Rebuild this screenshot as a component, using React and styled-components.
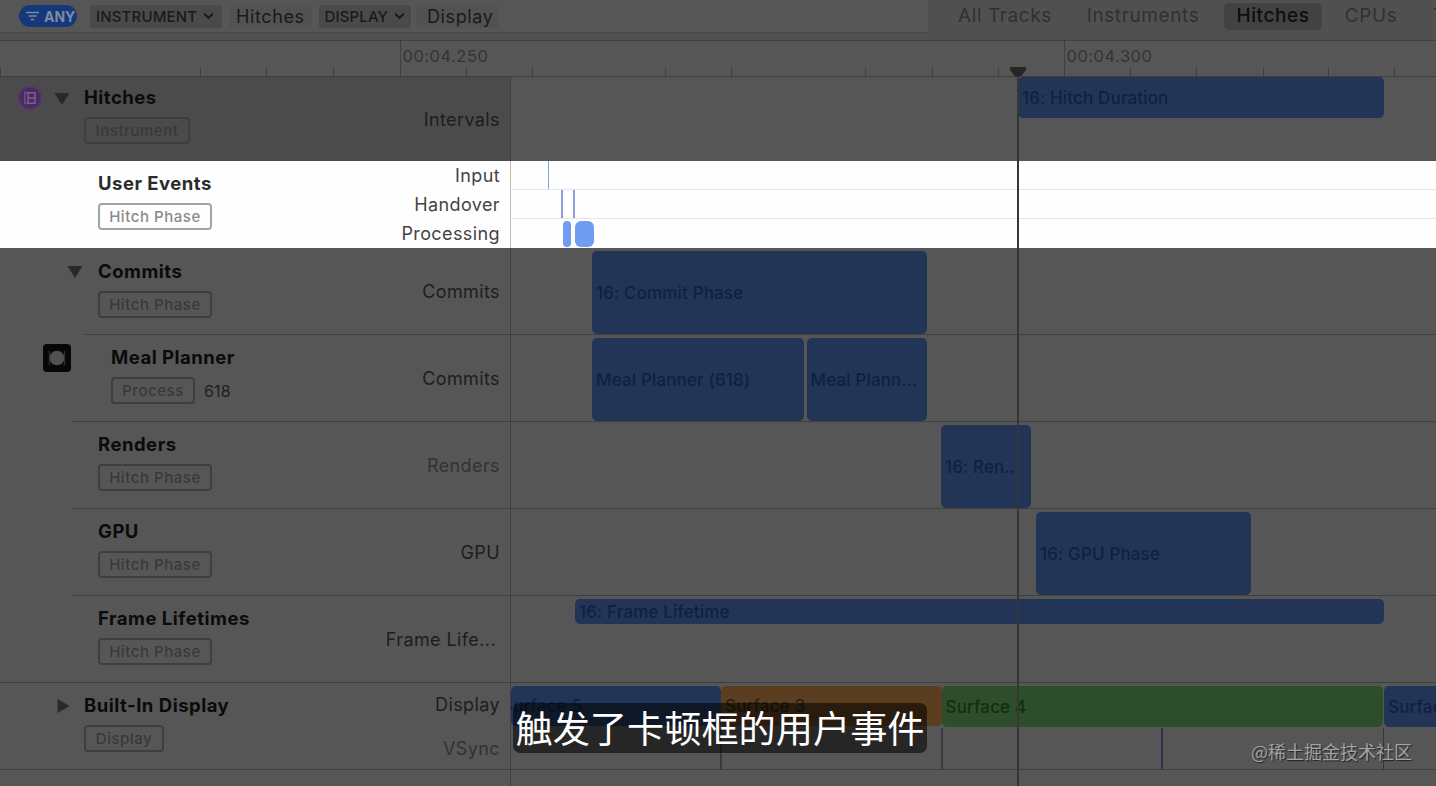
import React from "react";
import styled, { createGlobalStyle } from "styled-components";

const ink = {
  base: "#565656",
  bar: "#505050",
  selected: "#4b4b4b",
  line: "#3f3f3f",
  text: "#1e1e1e",
  blue: "#223556",
  orange: "#5b3e20",
  green: "#2d4d2b",
};

const GlobalStyle = createGlobalStyle`
  * { box-sizing: border-box; }
  body {
    margin: 0;
    background: ${ink.base};
    font-family: Inter, "Liberation Sans", "Noto Sans CJK SC", sans-serif;
    overflow: hidden;
  }
`;

const Window = styled.div`
  position: relative;
  width: 1436px;
  height: 786px;
  overflow: hidden;
  background: ${ink.base};
  color: ${ink.text};
  white-space: nowrap;
`;

const Toolbar = styled.header`
  display: flex;
  height: 41px;
  background: ${ink.bar};
  border-bottom: 1px solid ${ink.line};
`;

const FilterField = styled.div`
  display: flex;
  flex: none;
  align-items: center;
  width: 928px;
  height: 33px;
  padding-left: 19px;
  background: ${ink.base};
  border-bottom: 1px solid #4a4a4a;
`;

const AnyPill = styled.div`
  display: flex;
  align-items: center;
  gap: 5px;
  width: 58px;
  height: 22px;
  padding-left: 7px;
  border-radius: 11px;
  background: #15387b;
  color: #7e8aa3;
  font-size: 14px;
  font-weight: 700;
  letter-spacing: 0;
`;

const Token = styled.div`
  display: flex;
  align-items: center;
  gap: 6px;
  height: 23px;
  width: ${(p) => p.$width}px;
  margin-left: ${(p) => p.$gap}px;
  padding-left: ${(p) => p.$inset}px;
  border-radius: 3px;
  background: ${(p) => (p.$value ? "#525252" : "#4a4a4a")};
  color: #191919;
  font-size: ${(p) => (p.$value ? 18 : 15)}px;
  font-weight: ${(p) => (p.$value ? 400 : 500)};
  letter-spacing: ${(p) => (p.$value ? 0.6 : 0.15)}px;
`;

const Tabs = styled.nav`
  display: flex;
  flex: none;
  align-items: center;
  height: 32px;
  padding-left: 20px;
`;

const Tab = styled.div`
  width: ${(p) => p.$width}px;
  height: 27px;
  margin-right: ${(p) => p.$gap}px;
  border-radius: 5px;
  background: ${(p) => (p.$active ? "#424242" : "transparent")};
  color: ${(p) => (p.$active ? "#0e0e0e" : "#313131")};
  font-size: 19px;
  font-weight: ${(p) => (p.$active ? 500 : 400)};
  letter-spacing: 0.6px;
  line-height: 26px;
  text-align: center;
`;

const Ruler = styled.div`
  display: flex;
  align-items: flex-end;
  height: 36px;
  border-bottom: 1px solid ${ink.line};
`;

const Tick = styled.div`
  width: ${(p) => p.$span}px;
  height: ${(p) => (p.$major ? 35 : 8)}px;
  flex: none;
  padding: 4px 0 0 2px;
  border-left: 1px solid ${(p) => (p.$blank ? "transparent" : ink.line)};
  color: #333;
  font-size: 16.5px;
  line-height: 22px;
  letter-spacing: 0.5px;
`;

const Row = styled.section`
  display: flex;
  height: ${(p) => p.$height || 87}px;
  background: ${(p) => (p.$lit ? "#fefefe" : ink.base)};
  color: ${(p) => (p.$lit ? "#2b2b2b" : "#0b0b0b")};
  --label: ${(p) => (p.$lit ? "#444" : "#1d1d1d")};
  --tag: ${(p) => (p.$lit ? "#8a8a8a" : "#393939")};
  --edge: ${(p) => (p.$lit ? "#a4a4a4" : "#3e3e3e")};
  --rule: ${(p) => (p.$lit ? "#bdbdbd" : ink.line)};
`;

const Header = styled.div`
  display: flex;
  width: 511px;
  flex: none;
  border-right: 1px solid var(--rule);
  background: ${(p) => (p.$selected ? ink.selected : "transparent")};
`;

const Gutter = styled.div`
  display: flex;
  align-items: flex-start;
  justify-content: flex-end;
  width: ${(p) => p.$width}px;
  padding-right: ${(p) => p.$end}px;
  padding-top: ${(p) => p.$top}px;
  gap: 12px;
  flex: none;
  border-bottom: ${(p) => (p.$lined ? `1px solid ${ink.line}` : "0")};
`;

const Body = styled.div`
  display: flex;
  flex: 1;
  justify-content: space-between;
  padding-left: ${(p) => p.$inset}px;
  padding-right: 10px;
  border-bottom: ${(p) => (p.$lined ? `1px solid ${ink.line}` : "0")};
`;

const Info = styled.div`
  padding-top: ${(p) => p.$top}px;
`;

const Name = styled.div`
  height: 22px;
  font-size: 18.5px;
  font-weight: 700;
  line-height: 21px;
  letter-spacing: 0.5px;
`;

const TagLine = styled.div`
  display: flex;
  align-items: center;
  gap: 9px;
  margin-top: 8px;
  color: ${ink.text};
  font-size: 16px;
  letter-spacing: 0.2px;
`;

const Tag = styled.span`
  width: ${(p) => p.$width}px;
  height: 27px;
  border: 2px solid var(--edge);
  border-radius: 4px;
  color: var(--tag);
  font-size: 15px;
  font-weight: 500;
  letter-spacing: 0.55px;
  line-height: 23px;
  text-align: center;
`;

const Labels = styled.div`
  display: flex;
  flex-direction: column;
  justify-content: center;
  text-align: right;
  color: var(--label);
  font-size: 18px;
  letter-spacing: 0.4px;
`;

const Label = styled.div`
  height: ${(p) => p.$height || 29}px;
  line-height: ${(p) => p.$height || 29}px;
  color: ${(p) => (p.$muted ? "#323232" : "inherit")};
  padding-right: ${(p) => p.$end || 0}px;
  padding-bottom: ${(p) => p.$lift || 0}px;
`;

const Track = styled.div`
  display: flex;
  flex: 1;
  flex-direction: column;
  min-width: 0;
  overflow: hidden;
  border-bottom: ${(p) => (p.$lined ? `1px solid ${ink.line}` : "0")};
`;

const Lane = styled.div`
  display: flex;
  align-items: flex-start;
  height: ${(p) => p.$height}px;
  padding-top: ${(p) => p.$top || 0}px;
  flex: none;
  border-bottom: ${(p) => (p.$lined ? "1px solid #e6e6e6" : "0")};
`;

const Segment = styled.div`
  flex: none;
  width: ${(p) => p.$width}px;
  height: ${(p) => p.$height}px;
  line-height: ${(p) => p.$height + 1}px;
  margin-left: ${(p) => p.$gap || 0}px;
  padding-left: ${(p) => p.$pad ?? 4}px;
  text-indent: ${(p) => p.$indent || 0}px;
  border-radius: ${(p) => p.$radius ?? 5}px;
  overflow: hidden;
  background: ${(p) => p.$fill || ink.blue};
  color: ${(p) => p.$ink || "#101f42"};
  font-size: 17px;
  font-weight: 500;
  letter-spacing: 0.15px;
`;

const Playhead = styled.div`
  position: absolute;
  left: 1009px;
  top: 66px;
  width: 18px;
  height: 720px;
  display: flex;
  flex-direction: column;
  align-items: center;
`;

const Needle = styled.div`
  width: 2px;
  flex: 1;
  background: #363636;
`;

const Subtitle = styled.div`
  position: absolute;
  left: 513px;
  top: 703px;
  width: 414px;
  height: 50px;
  border-radius: 7px;
  background: rgba(0, 0, 0, 0.55);
  color: #fff;
  font-family: "Noto Sans CJK SC", sans-serif;
  font-size: 37.2px;
  line-height: 48px;
  text-align: center;
`;

const Watermark = styled.div`
  position: absolute;
  right: 24px;
  bottom: 21px;
  color: #a3a3a3;
  font-family: "Noto Sans CJK SC", sans-serif;
  font-size: 18px;
  line-height: 28px;
  text-shadow: 1px 1px 1px #222;
`;

const FilterIcon = () => (
  <svg width="13" height="12" viewBox="0 0 13 12" stroke="#7e8aa3" strokeWidth="1.5">
    <path d="M0 2.5H13M2.5 6H10.5M4.8 9.5H8.2" />
  </svg>
);

const Chevron = () => (
  <svg width="11" height="8" viewBox="0 0 11 8" fill="none" stroke="#191919" strokeWidth="2">
    <path d="M1.2 1.8L5.5 5.8L9.8 1.8" />
  </svg>
);

const HitchIcon = () => (
  <svg width="24" height="24" viewBox="0 0 24 24" fill="none">
    <circle cx="12" cy="12" r="11" fill="#4a2b5f" stroke="#582e74" strokeWidth="1.6" />
    <path d="M10 6.5H6.8V17.5H10" stroke="#6d5181" strokeWidth="1.5" />
    <path d="M10 6V18M17 6V18M10 6.7H17M10 12H17M10 17.3H17" stroke="#7b608f" strokeWidth="1.5" />
  </svg>
);

const Disclosure = ({ open }) => (
  <svg width="16" height="14" viewBox="0 0 16 14" fill="#292929">
    <path d={open ? "M0.5 1H15.5L8 13Z" : "M2.5 0V14L14.5 7Z"} />
  </svg>
);

const AppIcon = () => (
  <svg width="28" height="28" viewBox="0 0 28 28">
    <rect width="28" height="28" rx="4" fill="#070707" />
    <path d="M6.5 7V21M21.5 7V21" stroke="#2c2c2c" strokeWidth="1.5" />
    <circle cx="14" cy="14" r="7.3" fill="#515151" />
  </svg>
);

const ticks = [
  [0, 66.5], [66, 66.5, "blank"], [133, 67, "blank"], [200, 66], [266, 67], [333, 66.5],
  [399.5, 66.5, "major", "00:04.250"], [466, 66], [532, 67], [599, 66, "blank"], [665, 66],
  [731, 67], [798, 66.5, "blank"], [864.5, 67], [931.5, 66], [997.5, 66],
  [1063.5, 66.5, "major", "00:04.300"], [1130, 66], [1196, 67], [1263, 65], [1328, 66], [1394, 42],
];

const HeaderCell = ({
  name, tag, tagWidth = 114, indent = 98, gutter = 72, lined = true, fullLine,
  icons, end = 0, iconTop = 17, infoTop = 12, extra, selected, children,
}) => (
  <Header $selected={selected}>
    <Gutter $width={gutter} $end={end} $top={iconTop} $lined={fullLine}>{icons}</Gutter>
    <Body $inset={indent - gutter} $lined={lined}>
      <Info $top={infoTop}>
        <Name>{name}</Name>
        <TagLine><Tag $width={tagWidth}>{tag}</Tag>{extra}</TagLine>
      </Info>
      <Labels>{children}</Labels>
    </Body>
  </Header>
);

const Lowered = styled.div`
  display: flex;
  padding-top: 6px;
`;

export default function App() {
  return (
    <>
      <GlobalStyle />
      <Window>
        <Toolbar>
          <FilterField>
            <AnyPill><FilterIcon />ANY</AnyPill>
            <Token $gap={13} $width={132} $inset={6}>INSTRUMENT<Chevron /></Token>
            <Token $gap={7} $width={83} $inset={7} $value>Hitches</Token>
            <Token $gap={7} $width={92} $inset={5.5}>DISPLAY<Chevron /></Token>
            <Token $gap={5} $width={83} $inset={11} $value>Display</Token>
          </FilterField>
          <Tabs>
            <Tab $width={114} $gap={10}>All Tracks</Tab>
            <Tab $width={142} $gap={10}>Instruments</Tab>
            <Tab $width={98} $gap={14} $active>Hitches</Tab>
            <Tab $width={70} $gap={19}>CPUs</Tab>
            <Tab $width={94} $gap={0}>Threads</Tab>
          </Tabs>
        </Toolbar>
        <Ruler>
          {ticks.map(([x, span, kind, text]) => (
            <Tick key={x} $span={span} $major={kind === "major"} $blank={kind === "blank"}>{text}</Tick>
          ))}
        </Ruler>

        <Row $height={84}>
          <HeaderCell
            name="Hitches" tag="Instrument" tagWidth={106} indent={84} gutter={84} lined={false}
            selected end={14} iconTop={9} infoTop={10}
            icons={<><HitchIcon /><Lowered><Disclosure open /></Lowered></>}
          >
            <Label $height={29} $lift={2}>Intervals</Label>
          </HeaderCell>
          <Track>
            <Lane $height={84}><Segment $gap={507} $width={366} $height={41}>16: Hitch Duration</Segment></Lane>
          </Track>
        </Row>

        <Row $lit>
          <HeaderCell name="User Events" tag="Hitch Phase" lined={false}>
            <Label>Input</Label><Label>Handover</Label><Label>Processing</Label>
          </HeaderCell>
          <Track>
            <Lane $height={29} $lined><Segment $gap={36.5} $width={1.6} $height={28} $pad={0} $radius={0} $fill="#80a4dc" /></Lane>
            <Lane $height={29} $lined>
              <Segment $gap={50} $width={1.7} $height={28} $pad={0} $radius={0} $fill="#8a9fdc" />
              <Segment $gap={10.3} $width={1.7} $height={28} $pad={0} $radius={0} $fill="#8a9fdc" />
            </Lane>
            <Lane $height={29} $top={2}>
              <Segment $gap={51.5} $width={8.5} $height={26} $pad={0} $fill="#709df2" />
              <Segment $gap={3.5} $width={19} $height={26} $pad={0} $radius={6} $fill="#709df2" />
            </Lane>
          </Track>
        </Row>

        <Row>
          <HeaderCell
            name="Commits" tag="Hitch Phase" indent={98} gutter={85} end={2} infoTop={12.5}
            icons={<Disclosure open />}
          >
            <Label>Commits</Label>
          </HeaderCell>
          <Track $lined>
            <Lane $height={86} $top={3}><Segment $gap={81} $width={335} $height={83}>16: Commit Phase</Segment></Lane>
          </Track>
        </Row>

        <Row>
          <HeaderCell
            name="Meal Planner" tag="Process" tagWidth={84} indent={111} gutter={72} end={1} iconTop={9}
            icons={<AppIcon />} extra="618"
          >
            <Label>Commits</Label>
          </HeaderCell>
          <Track $lined>
            <Lane $height={86} $top={3}>
              <Segment $gap={81} $width={212} $height={83}>Meal Planner (618)</Segment>
              <Segment $gap={2.5} $width={120.5} $height={83}>Meal Plann...</Segment>
            </Lane>
          </Track>
        </Row>

        <Row>
          <HeaderCell name="Renders" tag="Hitch Phase"><Label $muted>Renders</Label></HeaderCell>
          <Track $lined>
            <Lane $height={86} $top={3}><Segment $gap={430} $width={90} $height={83}>16: Ren..</Segment></Lane>
          </Track>
        </Row>

        <Row>
          <HeaderCell name="GPU" tag="Hitch Phase"><Label>GPU</Label></HeaderCell>
          <Track $lined>
            <Lane $height={86} $top={3}><Segment $gap={525} $width={215} $height={83}>16: GPU Phase</Segment></Lane>
          </Track>
        </Row>

        <Row>
          <HeaderCell name="Frame Lifetimes" tag="Hitch Phase" fullLine><Label $end={4}>Frame Life...</Label></HeaderCell>
          <Track $lined>
            <Lane $height={86} $top={3}><Segment $gap={64} $width={808.5} $height={25}>16: Frame Lifetime</Segment></Lane>
          </Track>
        </Row>

        <Row>
          <HeaderCell
            name="Built-In Display" tag="Display" tagWidth={80} indent={84} gutter={84} end={13} iconTop={16}
            fullLine icons={<Disclosure />}
          >
            <Label $height={44}>Display</Label><Label $height={43} $muted>VSync</Label>
          </HeaderCell>
          <Track $lined>
            <Lane $height={45} $top={3}>
              <Segment $width={210} $height={40} $pad={0} $indent={-9}>Surface 5</Segment>
              <Segment $width={220.5} $height={40} $fill={ink.orange} $ink="#2c210f">Surface 3</Segment>
              <Segment $width={441.5} $height={41} $fill={ink.green} $ink="#122e12">Surface 4</Segment>
              <Segment $gap={1} $width={100} $height={41}>Surface 5</Segment>
            </Lane>
            <Lane $height={41}>
              {[209, 219.5, 218.5, 220].map((gap, i) => (
                <Segment key={i} $gap={gap} $width={1.5} $height={41} $pad={0} $radius={0} $fill={i < 2 ? "#3a3a3a" : "#30344c"} />
              ))}
            </Lane>
          </Track>
        </Row>

        <Row $height={20}><Header /></Row>

        <Playhead>
          <svg width="18" height="11" viewBox="0 0 18 11"><path d="M1 1H17V4L12 10.5H6L1 4Z" fill="#262626" /></svg>
          <Needle />
        </Playhead>
        <Subtitle>触发了卡顿框的用户事件</Subtitle>
        <Watermark>@稀土掘金技术社区</Watermark>
      </Window>
    </>
  );
}
